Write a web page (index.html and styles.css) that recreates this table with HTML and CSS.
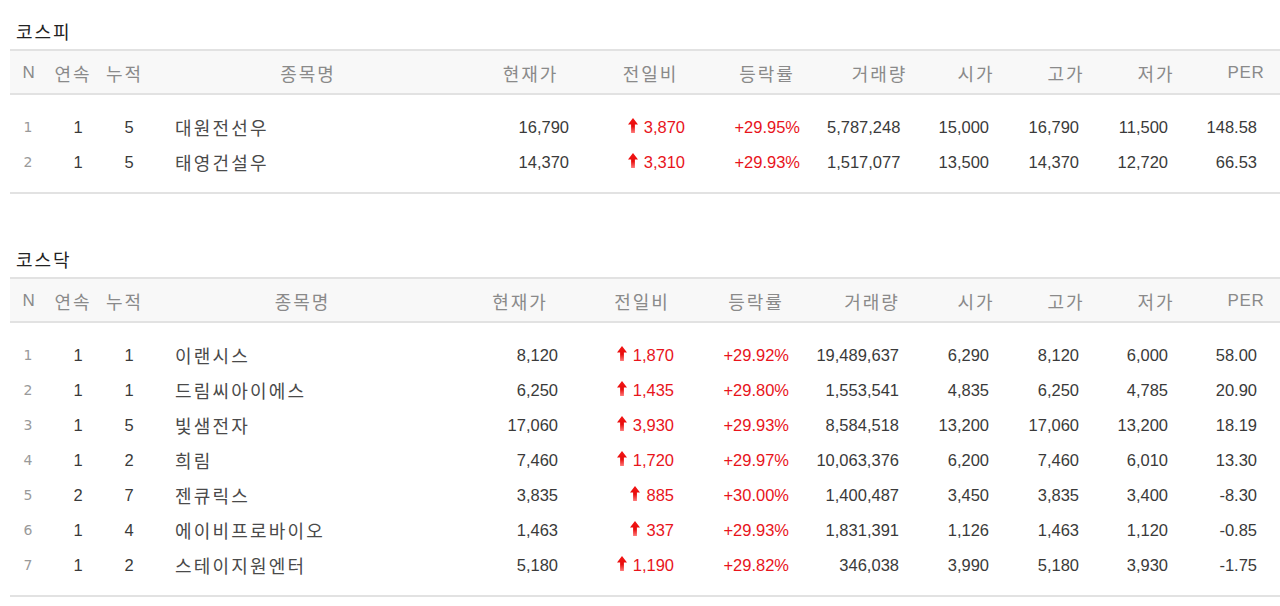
FILE: index.html
```html
<!DOCTYPE html>
<html lang="ko">
<head>
<meta charset="utf-8">
<title>상한가 종목</title>
<link rel="stylesheet" href="styles.css">
</head>
<body>
<svg class="defs" width="0" height="0" aria-hidden="true">
  <defs>
    <linearGradient id="upGrad" x1="0" y1="0" x2="0" y2="1">
      <stop offset="0" stop-color="#f21616"/>
      <stop offset="0.55" stop-color="#e80c0c"/>
      <stop offset="1" stop-color="#ff7a7a"/>
    </linearGradient>
    <symbol id="up" viewBox="0 0 10 15">
      <path d="M5 0 L10 6.5 H6.9 V15 H3.1 V6.5 H0 Z" fill="url(#upGrad)"/>
    </symbol>
  </defs>
</svg>

<section class="market kospi">
  <h2 class="market-title">코스피</h2>
  <table class="rank-table">
    <colgroup>
      <col class="w-n"><col class="w-s"><col class="w-c"><col class="w-name"><col class="w-price"><col class="w-diff"><col class="w-rate"><col class="w-vol"><col class="w-open"><col class="w-high"><col class="w-low"><col class="w-per">
    </colgroup>
    <thead>
      <tr><th class="lat">N</th><th>연속</th><th>누적</th><th>종목명</th><th>현재가</th><th>전일비</th><th>등락률</th><th>거래량</th><th>시가</th><th>고가</th><th>저가</th><th class="lat">PER</th></tr>
    </thead>
    <tbody>
      <tr><td class="c-n">1</td><td class="c-s">1</td><td class="c-c">5</td><td class="c-name">대원전선우</td><td class="c-price">16,790</td><td class="c-diff up"><svg class="arrow"><use href="#up"/></svg>3,870</td><td class="c-rate up">+29.95%</td><td class="c-vol">5,787,248</td><td class="c-open">15,000</td><td class="c-high">16,790</td><td class="c-low">11,500</td><td class="c-per">148.58</td></tr>
      <tr><td class="c-n">2</td><td class="c-s">1</td><td class="c-c">5</td><td class="c-name">태영건설우</td><td class="c-price">14,370</td><td class="c-diff up"><svg class="arrow"><use href="#up"/></svg>3,310</td><td class="c-rate up">+29.93%</td><td class="c-vol">1,517,077</td><td class="c-open">13,500</td><td class="c-high">14,370</td><td class="c-low">12,720</td><td class="c-per">66.53</td></tr>
    </tbody>
  </table>
</section>

<section class="market kosdaq">
  <h2 class="market-title">코스닥</h2>
  <table class="rank-table">
    <colgroup>
      <col class="w-n"><col class="w-s"><col class="w-c"><col class="w-name"><col class="w-price"><col class="w-diff"><col class="w-rate"><col class="w-vol"><col class="w-open"><col class="w-high"><col class="w-low"><col class="w-per">
    </colgroup>
    <thead>
      <tr><th class="lat">N</th><th>연속</th><th>누적</th><th>종목명</th><th>현재가</th><th>전일비</th><th>등락률</th><th>거래량</th><th>시가</th><th>고가</th><th>저가</th><th class="lat">PER</th></tr>
    </thead>
    <tbody>
      <tr><td class="c-n">1</td><td class="c-s">1</td><td class="c-c">1</td><td class="c-name">이랜시스</td><td class="c-price">8,120</td><td class="c-diff up"><svg class="arrow"><use href="#up"/></svg>1,870</td><td class="c-rate up">+29.92%</td><td class="c-vol">19,489,637</td><td class="c-open">6,290</td><td class="c-high">8,120</td><td class="c-low">6,000</td><td class="c-per">58.00</td></tr>
      <tr><td class="c-n">2</td><td class="c-s">1</td><td class="c-c">1</td><td class="c-name">드림씨아이에스</td><td class="c-price">6,250</td><td class="c-diff up"><svg class="arrow"><use href="#up"/></svg>1,435</td><td class="c-rate up">+29.80%</td><td class="c-vol">1,553,541</td><td class="c-open">4,835</td><td class="c-high">6,250</td><td class="c-low">4,785</td><td class="c-per">20.90</td></tr>
      <tr><td class="c-n">3</td><td class="c-s">1</td><td class="c-c">5</td><td class="c-name">빛샘전자</td><td class="c-price">17,060</td><td class="c-diff up"><svg class="arrow"><use href="#up"/></svg>3,930</td><td class="c-rate up">+29.93%</td><td class="c-vol">8,584,518</td><td class="c-open">13,200</td><td class="c-high">17,060</td><td class="c-low">13,200</td><td class="c-per">18.19</td></tr>
      <tr><td class="c-n">4</td><td class="c-s">1</td><td class="c-c">2</td><td class="c-name">희림</td><td class="c-price">7,460</td><td class="c-diff up"><svg class="arrow"><use href="#up"/></svg>1,720</td><td class="c-rate up">+29.97%</td><td class="c-vol">10,063,376</td><td class="c-open">6,200</td><td class="c-high">7,460</td><td class="c-low">6,010</td><td class="c-per">13.30</td></tr>
      <tr><td class="c-n">5</td><td class="c-s">2</td><td class="c-c">7</td><td class="c-name">젠큐릭스</td><td class="c-price">3,835</td><td class="c-diff up"><svg class="arrow"><use href="#up"/></svg>885</td><td class="c-rate up">+30.00%</td><td class="c-vol">1,400,487</td><td class="c-open">3,450</td><td class="c-high">3,835</td><td class="c-low">3,400</td><td class="c-per">-8.30</td></tr>
      <tr><td class="c-n">6</td><td class="c-s">1</td><td class="c-c">4</td><td class="c-name">에이비프로바이오</td><td class="c-price">1,463</td><td class="c-diff up"><svg class="arrow"><use href="#up"/></svg>337</td><td class="c-rate up">+29.93%</td><td class="c-vol">1,831,391</td><td class="c-open">1,126</td><td class="c-high">1,463</td><td class="c-low">1,120</td><td class="c-per">-0.85</td></tr>
      <tr><td class="c-n">7</td><td class="c-s">1</td><td class="c-c">2</td><td class="c-name">스테이지원엔터</td><td class="c-price">5,180</td><td class="c-diff up"><svg class="arrow"><use href="#up"/></svg>1,190</td><td class="c-rate up">+29.82%</td><td class="c-vol">346,038</td><td class="c-open">3,990</td><td class="c-high">5,180</td><td class="c-low">3,930</td><td class="c-per">-1.75</td></tr>
    </tbody>
  </table>
</section>
</body>
</html>
```

FILE: styles.css
```css
html {
  overflow: hidden;
  background: #fff;
}

body {
  margin: 0;
  font-family: "Liberation Sans", "Noto Sans CJK KR", sans-serif;
  color: #3a3a3a;
}

.defs {
  position: absolute;
  width: 0;
  height: 0;
}

.market {
  padding-top: 19px;
}

.kosdaq {
  margin-top: 34px;
}

.market-title {
  margin: 0;
  padding: 0 0 6px 16px;
  font-family: "Noto Sans CJK KR", sans-serif;
  font-size: 18px;
  font-weight: normal;
  line-height: 24px;
  letter-spacing: 2px;
  color: #222;
}

.rank-table {
  margin-left: 10px;
  width: 1280px;
  table-layout: fixed;
  border-collapse: collapse;
  border-spacing: 0;
  border-top: 2px solid #e2e2e2;
  border-bottom: 2px solid #e2e2e2;
}

.w-n { width: 36px; }
.w-s { width: 52px; }
.w-c { width: 51px; }
.w-open, .w-high, .w-low, .w-per { width: 90px; }

.kospi .w-name { width: 316px; }
.kospi .w-price { width: 129px; }
.kospi .w-diff { width: 111px; }
.kospi .w-rate { width: 122px; }
.kospi .w-vol { width: 103px; }

.kosdaq .w-name { width: 305px; }
.kosdaq .w-price { width: 130px; }
.kosdaq .w-diff { width: 114px; }
.kosdaq .w-rate { width: 114px; }
.kosdaq .w-vol { width: 118px; }

.rank-table thead th {
  height: 41px;
  padding: 1px 0 0 2px;
  background: #f8f8f8;
  border-bottom: 2px solid #e2e2e2;
  font-family: "Noto Sans CJK KR", sans-serif;
  font-size: 18px;
  font-weight: normal;
  letter-spacing: 2px;
  color: #8a8a8a;
  text-align: center;
  white-space: nowrap;
}

.rank-table thead th.lat {
  font-family: "Liberation Sans", sans-serif;
  letter-spacing: 0.6px;
  font-size: 17px;
}

.rank-table tbody td {
  padding: 0;
  line-height: 35px;
  font-size: 16.5px;
  white-space: nowrap;
  text-align: right;
  vertical-align: middle;
}

.rank-table tbody tr:first-child td {
  padding-top: 15px;
}

.rank-table tbody tr:last-child td {
  padding-bottom: 12px;
}

.c-n {
  text-align: center !important;
  font-family: "DejaVu Sans", sans-serif;
  font-size: 14px !important;
  color: #9a9a9a;
}

.c-s {
  text-align: center !important;
  padding-left: 12px !important;
}

.c-c {
  text-align: center !important;
  padding-left: 11px !important;
}

.c-name {
  text-align: left !important;
  padding-left: 26px !important;
  font-family: "Noto Sans CJK KR", sans-serif;
  font-size: 18px !important;
  letter-spacing: 2.2px;
  color: #4a4a4a;
}

.rank-table td.c-open,
.rank-table td.c-high { padding-right: 31px; }
.rank-table td.c-low { padding-right: 32px; }
.rank-table td.c-per { padding-right: 33px; }
.rank-table td.c-vol { padding-right: 31px; }

.kospi .rank-table td.c-price { padding-right: 25px; }
.kospi .rank-table td.c-diff { padding-right: 20px; }
.kospi .rank-table td.c-rate { padding-right: 27px; }

.kosdaq .rank-table td.c-price { padding-right: 26px; }
.kosdaq .rank-table td.c-diff { padding-right: 24px; }
.kosdaq .rank-table td.c-rate { padding-right: 23px; }

.up {
  color: #e8141b;
}

.arrow {
  width: 10px;
  height: 15px;
  margin-right: 6px;
  vertical-align: 0;
}
```
